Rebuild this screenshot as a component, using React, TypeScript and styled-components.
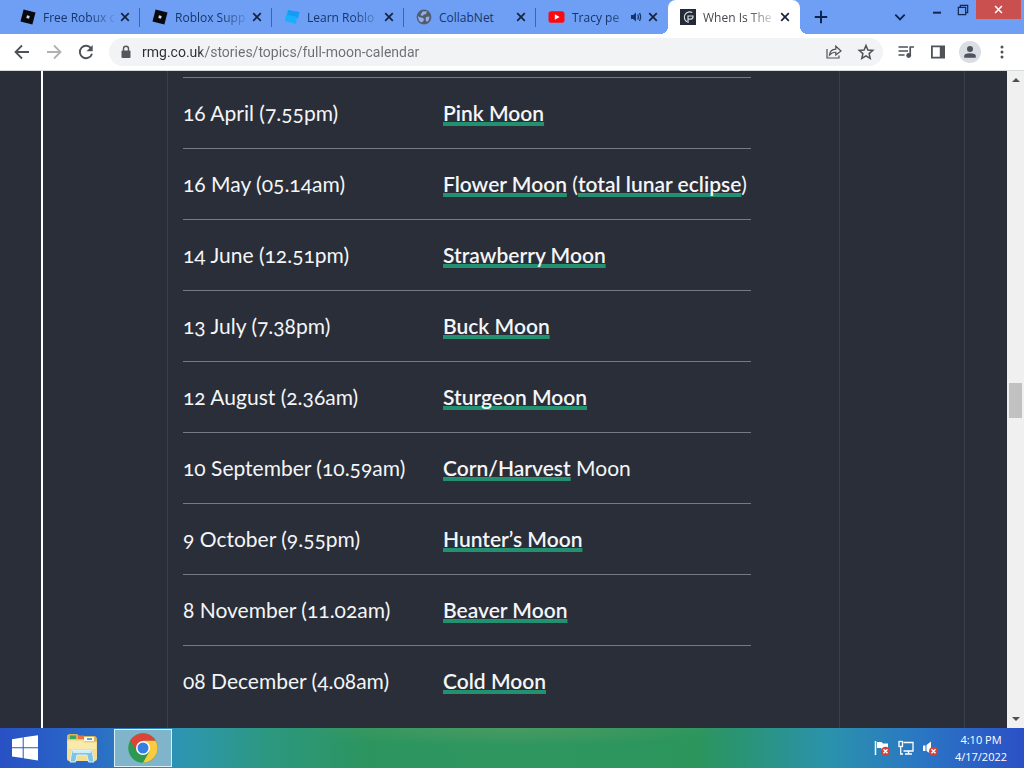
import React from "react";
import styled, { createGlobalStyle, css } from "styled-components";

const GlobalStyle = createGlobalStyle`
  *, *::before, *::after { box-sizing: border-box; }
  body { margin: 0; font-family: "Open Sans", "Noto Sans", sans-serif; }
  button { border: 0; padding: 0; margin: 0; background: none; font: inherit; color: inherit; cursor: default; }
`;

const Desktop = styled.div`
  display: flex;
  flex-direction: column;
  height: 100vh;
  overflow: hidden;
`;

/* ---------- tab strip ---------- */

const TabStrip = styled.header`
  display: flex;
  flex: none;
  height: 34px;
  padding: 0 3px 0 8px;
  background: #6e9ff5;
  color: #173568;
`;

const Tabs = styled.div`
  display: flex;
`;

const TabItem = styled.div<{ $active?: boolean; $divided?: boolean }>`
  position: relative;
  display: flex;
  align-items: center;
  width: 132px;
  padding: 0 7px 0 12px;
  ${(p) =>
    p.$divided &&
    css`
      &::after {
        content: "";
        position: absolute;
        right: 0;
        top: 8px;
        width: 1px;
        height: 19px;
        background: #3d64ad;
      }
    `}
  ${(p) =>
    p.$active &&
    css`
      background: #fff;
      color: #45494d;
      border-radius: 8px 8px 0 0;
      &::before,
      &::after {
        content: "";
        position: absolute;
        bottom: 0;
        width: 8px;
        height: 8px;
      }
      &::before {
        right: 100%;
        background: radial-gradient(circle at 0 0, transparent 8px, #fff 8px);
      }
      &::after {
        left: 100%;
        background: radial-gradient(circle at 100% 0, transparent 8px, #fff 8px);
      }
    `}
`;

const TabButton = styled.button`
  display: flex;
  flex: 1;
  min-width: 0;
  height: 34px;
  align-items: center;
  font-size: 12px;
  svg {
    flex: none;
  }
`;

const TabTitle = styled.span<{ $fade: boolean }>`
  flex: 1;
  min-width: 0;
  margin-left: 7px;
  white-space: nowrap;
  text-align: left;
  ${(p) =>
    p.$fade &&
    css`
      mask-image: linear-gradient(to right, #000 65%, rgba(0, 0, 0, 0.15));
    `}
`;

const CloseTab = styled.button`
  display: flex;
  flex: none;
  align-items: center;
  justify-content: center;
  width: 16px;
  height: 16px;
  margin-left: 3px;
  color: #17233d;
`;

const StripButton = styled.button`
  display: flex;
  align-items: center;
  justify-content: center;
  width: 28px;
  height: 34px;
  margin-left: 7px;
  color: #0d2350;
`;

const WindowControls = styled.div`
  display: flex;
  color: #14284f;
`;

const WindowButton = styled.button<{ $close?: boolean }>`
  display: flex;
  align-items: center;
  justify-content: center;
  width: ${(p) => (p.$close ? 45 : 26)}px;
  height: 19px;
  background: ${(p) => (p.$close ? "#c9504e" : "transparent")};
  color: ${(p) => (p.$close ? "#fff" : "inherit")};
`;

const ListTabs = styled(StripButton)`
  margin: 0 10px 0 auto;
`;

/* ---------- toolbar ---------- */

const Toolbar = styled.div`
  display: flex;
  flex: none;
  align-items: center;
  height: 37px;
  padding: 0 6px;
  background: #fff;
  border-bottom: 1px solid #d5dadb;
  color: #4f5357;
`;

const ToolButton = styled.button<{ $dim?: boolean }>`
  display: flex;
  flex: none;
  align-items: center;
  justify-content: center;
  width: 32px;
  height: 28px;
  opacity: ${(p) => (p.$dim ? 0.45 : 1)};
`;

const Omnibox = styled.form`
  display: flex;
  flex: 1;
  align-items: center;
  height: 28px;
  margin: 0 7px;
  padding: 0 1px 0 10px;
  background: #f1f3f4;
  border-radius: 14px;
`;

const Address = styled.input`
  flex: 1;
  min-width: 0;
  height: 28px;
  margin-left: 9px;
  padding: 0;
  border: 0;
  outline: 0;
  font: 14px/28px Roboto, "Open Sans", sans-serif;
  color: transparent;
  background: linear-gradient(to right, #2b2e31 60px, #6a6f74 60px);
  background-clip: text;
`;

const Avatar = styled.span`
  display: flex;
  width: 22px;
  height: 22px;
  border-radius: 50%;
  background: #dadde3;
`;

/* ---------- web page ---------- */

const Viewport = styled.div`
  display: flex;
  flex: 1;
  min-height: 0;
  background: #292e39;
`;

const Gutter = styled.div`
  flex: none;
  width: 43px;
  border-right: 2px solid #fff;
`;

const Page = styled.main`
  display: flex;
  flex: 1;
  min-width: 0;
  margin: 0 42px 0 124px;
  border: solid #3a404b;
  border-width: 0 1px;
`;

const Article = styled.article`
  flex: 1;
  min-width: 0;
  margin-right: 124px;
  padding: 6px 88px 0 15px;
  border-right: 1px solid #3a404b;
  overflow: hidden;
`;

const MoonTable = styled.table`
  width: 100%;
  border-collapse: separate;
  border-spacing: 0;
  table-layout: fixed;
  font-family: "Lato", "Open Sans", sans-serif;
  font-size: 21px;
  line-height: 30px;
  font-variant-numeric: oldstyle-nums;
  color: #f4f5f7;
`;

const Cell = styled.td<{ $date?: boolean }>`
  width: ${(p) => (p.$date ? "260px" : "auto")};
  height: 71px;
  padding: 0;
  border-top: 1px solid #747a84;
  white-space: nowrap;
`;

const MoonLink = styled.a`
  color: inherit;
  font-weight: 600;
  text-decoration: underline 4px #23906f;
  text-underline-offset: 1px;
  text-decoration-skip-ink: none;
`;

const ScrollTrack = styled.div`
  display: flex;
  flex: none;
  flex-direction: column;
  align-items: center;
  width: 17px;
  background: #f0f0f1;
`;

const ScrollArrow = styled.button`
  display: flex;
  flex: none;
  align-items: center;
  justify-content: center;
  width: 17px;
  height: 18px;
  color: #4d4f52;
`;

const ScrollLane = styled.div`
  display: grid;
  flex: 1;
  grid-template-rows: 294fr 35px 292fr;
`;

const Thumb = styled.div`
  grid-row: 2;
  width: 13px;
  background: #c1c1c2;
`;

/* ---------- taskbar ---------- */

const Taskbar = styled.footer`
  display: flex;
  flex: none;
  align-items: center;
  height: 40px;
  background:
    radial-gradient(ellipse 220px 18px at 50% 0, #489b61, transparent),
    linear-gradient(to right, #2850c4 0, #2a6bc8 9%, #2d96b0 18%, #2c9880 26%, #2c955f 36%, #2f9660 50%, #2b955c 68%, #2a9480 74%, #2a92ac 81%, #2a76c4 90%, #2b50c6 100%);
`;

const TaskButton = styled.button<{ $active?: boolean; $wide?: boolean }>`
  display: flex;
  align-items: center;
  justify-content: center;
  width: ${(p) => (p.$wide ? 58 : 50)}px;
  height: 38px;
  margin-left: ${(p) => (p.$wide ? 3 : 0)}px;
  ${(p) =>
    p.$active &&
    css`
      background: #7fb4cb;
      border: 1px solid #d9eff8;
    `}
`;

const Tray = styled.div`
  display: flex;
  gap: 8px;
  align-items: center;
  margin-left: auto;
  button {
    display: flex;
  }
`;

const Clock = styled.time`
  width: 86px;
  text-align: center;
  font-size: 11px;
  line-height: 17px;
  color: #fff;
  span {
    display: block;
  }
`;

/* ---------- drawings ---------- */

const RobloxIcon = () => (
  <svg width="16" height="16" viewBox="0 0 16 16">
    <path d="M3.6 .5 15.5 3.6 12.4 15.5 .5 12.4Z" fill="#08090d" />
    <path d="M7 6.300 9.700 7 9 9.700 6.300 9Z" fill="#c9d6f2" />
  </svg>
);

const LearnIcon = () => (
  <svg width="16" height="16" viewBox="0 0 16 16">
    <path d="M4 1 15.5 3 14 9.5 2.5 7.5Z" fill="#149cf4" />
    <path d="M2 5.5 13 8 12 15 .8 12Z" fill="#18b0fb" />
  </svg>
);

const GlobeIcon = () => (
  <svg width="16" height="16" viewBox="0 0 16 16">
    <circle cx="8" cy="8" r="7.4" fill="#535c6c" />
    <path d="M2 7q2 2 4 1.500l2 1.500-.5 2 -2 1.500Q2 12 2 7ZM6.500 2.500 11 2.300 10 5 8 5.500 6.500 7 4.500 6ZM10 8l3.500-.5Q13.500 11 11 13L9.500 11Z" fill="#8fb0e8" />
  </svg>
);

const YoutubeIcon = () => (
  <svg width="17" height="16" viewBox="0 0 17 16">
    <rect x=".5" y="2.300" width="16" height="11.400" rx="2.800" fill="#fb0b10" />
    <path d="M6.800 5.300 11.600 8 6.800 10.700Z" fill="#fff" />
  </svg>
);

const GreenwichIcon = () => (
  <svg width="16" height="16" viewBox="0 0 16 16">
    <path d="M0 0H16V16H0Z" fill="#252b36" />
    <g fill="none" stroke="#d5dae2" strokeWidth="1.200">
      <path d="M12.300 3.600A5.300 5.300 0 1 0 7 12.800M8 14V7H13.500M8 10.200H10.500Q13.500 9.700 13 6.500" />
    </g>
  </svg>
);

const SpeakerIcon = () => (
  <svg width="12" height="12" viewBox="0 0 12 12">
    <path d="M1 4H3.200L6 1.500V10.500L3.200 8H1Z" fill="currentColor" />
    <path d="M7.700 3.500Q9 6 7.700 8.500M9.500 2.200Q11.700 6 9.500 9.800" fill="none" stroke="currentColor" strokeWidth="1.300" />
  </svg>
);

const Cross = ({ size = 10, weight = 1.7 }: { size?: number; weight?: number }) => (
  <svg width={size} height={size} viewBox="0 0 10 10">
    <path d="M1.200 1.200 8.800 8.800M8.800 1.200 1.200 8.800" stroke="currentColor" strokeWidth={weight} />
  </svg>
);

const Line = ({ d, weight = 1.8, size = 18 }: { d: string; weight?: number; size?: number }) => (
  <svg width={size} height={size} viewBox="0 0 18 18">
    <path d={d} fill="none" stroke="currentColor" strokeWidth={weight} />
  </svg>
);

const ReloadIcon = () => (
  <svg width="18" height="18" viewBox="0 0 18 18">
    <path d="M14.300 5.700A6.200 6.200 0 1 0 15 10.700" fill="none" stroke="currentColor" strokeWidth="1.900" />
    <path d="M15.700 2V8.200H9.500Z" fill="currentColor" />
  </svg>
);

const LockIcon = () => (
  <svg width="14" height="14" viewBox="0 0 14 14">
    <rect x="2.500" y="5.500" width="9" height="7.500" rx="1" fill="#54585c" />
    <path d="M4.500 6V3.800a2.500 2.500 0 0 1 5 0V6" fill="none" stroke="#54585c" strokeWidth="1.400" />
  </svg>
);

const ShareIcon = () => (
  <svg width="18" height="18" viewBox="0 0 18 18">
    <g fill="none" stroke="currentColor" strokeWidth="1.200">
      <path d="M2 6V15H14V12.500" />
      <path d="M4.500 12Q5 6.500 10.800 6.200V3.200L16 8 10.800 12V9.300Q7 9 4.500 12Z" />
    </g>
  </svg>
);

const MediaIcon = () => (
  <svg width="18" height="18" viewBox="0 0 18 18">
    <path d="M1.500 4H11M1.500 8H11M1.500 12H7.500M13.200 13V4H17" fill="none" stroke="currentColor" strokeWidth="1.700" />
    <circle cx="11.700" cy="12.500" r="2.400" fill="currentColor" />
  </svg>
);

const PanelIcon = () => (
  <svg width="16" height="16" viewBox="0 0 16 16">
    <path d="M1 1.500H15V14.500H1ZM2.800 3.300V12.700H9.800V3.300Z" fillRule="evenodd" fill="currentColor" />
  </svg>
);

const PersonIcon = () => (
  <svg width="22" height="22" viewBox="0 0 22 22">
    <circle cx="11" cy="7.900" r="3" fill="#4e535c" />
    <path d="M5.200 16.700V15Q5.200 12.300 11 12.300T16.800 15V16.700Z" fill="#4e535c" />
  </svg>
);

const MenuIcon = () => (
  <svg width="6" height="18" viewBox="0 0 6 18" fill="currentColor">
    <circle cx="3" cy="4" r="1.500" />
    <circle cx="3" cy="9" r="1.500" />
    <circle cx="3" cy="14" r="1.500" />
  </svg>
);

const WindowsIcon = () => (
  <svg width="28" height="28" viewBox="0 0 28 28" fill="#fff">
    <path d="M1 5.200 11.700 3.500V13.300H1ZM12.700 3.300 27 1.200V13.300H12.700ZM1 14.300H11.700V24L1 22.500ZM12.700 14.300H27V26.500L12.700 24.200Z" />
  </svg>
);

const FolderIcon = () => (
  <svg width="34" height="32" viewBox="0 0 34 32">
    <path d="M2 3.500 4 2H12L14 4H30L32 6V27Q32 29 30 29H4Q2 29 2 27Z" fill="#d7b658" />
    <path d="M5 3.500H11V7H5Z" fill="#36a56b" />
    <path d="M13 3.500H19V7H13Z" fill="#e87349" />
    <path d="M19 5H29V9H19Z" fill="#f7fafa" />
    <path d="M22 6H27V8H22Z" fill="#5aa4d6" />
    <path d="M2 7.500H18L20 9.500H32V27L30 29H4L2 27Z" fill="#f5de8f" />
    <path d="M3 9H17L19 11H31V17H3Z" fill="#fae9ad" />
    <path d="M7 18.500H27L29 30H23.500L22 23H12L10.500 30H5Z" fill="#7cc5e5" stroke="#d6f1fa" />
    <path d="M8 20H26" stroke="#e8f9ff" strokeWidth="1.500" />
  </svg>
);

const ChromeIcon = () => (
  <svg width="30" height="30" viewBox="0 0 30 30">
    <circle cx="15" cy="15" r="14.700" fill="#2c9a50" />
    <path d="M2.300 7.700A14.700 14.700 0 0 1 27.700 7.700L15 8 9 18.500Z" fill="#dc4437" />
    <path d="M27.700 7.700A14.700 14.700 0 0 1 15 29.700L21.400 18.500 15 7.700Z" fill="#fbca3e" />
    <circle cx="15" cy="15" r="7" fill="#fff" />
    <circle cx="15" cy="15" r="5.500" fill="#367fe2" />
  </svg>
);

const AlertBadge = () => (
  <g>
    <circle cx="11.500" cy="11.300" r="4.500" fill="#d8403c" />
    <path d="M9.500 9.300 13.500 13.300M13.500 9.300 9.500 13.300" stroke="#fff" strokeWidth="1.400" />
  </g>
);

const FlagIcon = () => (
  <svg width="16" height="16" viewBox="0 0 16 16">
    <path d="M1.500 1V15" stroke="#fff" strokeWidth="1.500" />
    <path d="M3 2H7.500L9 3.500H14V9.500H8L7 8H3Z" fill="#fff" />
    <AlertBadge />
  </svg>
);

const NetworkIcon = () => (
  <svg width="16" height="16" viewBox="0 0 16 16" fill="none" stroke="#fff" strokeWidth="1.300">
    <path d="M5.500 2.500H15V11H5.500M10.500 11V13.500M7 14H14M2.700 6.500V14H5" />
    <rect x="1" y="1.500" width="3.500" height="5" />
  </svg>
);

const MutedIcon = () => (
  <svg width="16" height="16" viewBox="0 0 16 16">
    <path d="M1 5.500H3.500V11H1ZM4.500 5 9 1.500V14L4.500 11Z" fill="#fff" />
    <AlertBadge />
  </svg>
);

/* ---------- data ---------- */

const tabs = [
  { title: "Free Robux c", icon: <RobloxIcon />, fade: true },
  { title: "Roblox Supp", icon: <RobloxIcon />, fade: true },
  { title: "Learn Roblo", icon: <LearnIcon />, fade: true },
  { title: "CollabNet", icon: <GlobeIcon />, fade: false },
  { title: "Tracy pe", icon: <YoutubeIcon />, fade: true, audio: true },
  { title: "When Is The", icon: <GreenwichIcon />, fade: true, active: true },
];

const moons: [string, React.ReactNode][] = [
  ["16 April (7.55pm)", <MoonLink href="#pink">Pink Moon</MoonLink>],
  [
    "16 May (05.14am)",
    <>
      <MoonLink href="#flower">Flower Moon</MoonLink> (<MoonLink href="#eclipse">total lunar eclipse</MoonLink>)
    </>,
  ],
  ["14 June (12.51pm)", <MoonLink href="#strawberry">Strawberry Moon</MoonLink>],
  ["13 July (7.38pm)", <MoonLink href="#buck">Buck Moon</MoonLink>],
  ["12 August (2.36am)", <MoonLink href="#sturgeon">Sturgeon Moon</MoonLink>],
  [
    "10 September (10.59am)",
    <>
      <MoonLink href="#harvest">Corn/Harvest</MoonLink> Moon
    </>,
  ],
  ["9 October (9.55pm)", <MoonLink href="#hunter">Hunter’s Moon</MoonLink>],
  ["8 November (11.02am)", <MoonLink href="#beaver">Beaver Moon</MoonLink>],
  ["08 December (4.08am)", <MoonLink href="#cold">Cold Moon</MoonLink>],
];

export default function App() {
  return (
    <Desktop>
      <GlobalStyle />
      <TabStrip>
        <Tabs>
          {tabs.map((tab, i) => (
            <TabItem key={tab.title} $active={tab.active} $divided={i < 4}>
              <TabButton>
                {tab.icon}
                <TabTitle $fade={tab.fade}>{tab.title}</TabTitle>
                {tab.audio && <SpeakerIcon />}
              </TabButton>
              <CloseTab aria-label={`Close ${tab.title}`}>
                <Cross />
              </CloseTab>
            </TabItem>
          ))}
        </Tabs>
        <StripButton aria-label="New tab">
          <Line size={16} weight={2.2} d="M9 2V16M2 9H16" />
        </StripButton>
        <ListTabs aria-label="Search tabs">
          <Line size={14} weight={2.4} d="M3 6 9 12 15 6" />
        </ListTabs>
        <WindowControls>
          <WindowButton aria-label="Minimize">
            <Line size={12} weight={3} d="M3 13H15" />
          </WindowButton>
          <WindowButton aria-label="Restore">
            <Line size={12} weight={1.8} d="M2 5H13V16H2ZM5 5V2H16V13H13" />
          </WindowButton>
          <WindowButton $close aria-label="Close window">
            <Cross size={9} />
          </WindowButton>
        </WindowControls>
      </TabStrip>

      <Toolbar>
        <ToolButton aria-label="Back">
          <Line d="M16 9H3M9 2.500 2.500 9 9 15.500" />
        </ToolButton>
        <ToolButton $dim aria-label="Forward">
          <Line d="M2 9H15M9 2.500 15.500 9 9 15.500" />
        </ToolButton>
        <ToolButton aria-label="Reload">
          <ReloadIcon />
        </ToolButton>
        <Omnibox>
          <LockIcon />
          <Address aria-label="Address" defaultValue="rmg.co.uk/stories/topics/full-moon-calendar" />
          <ToolButton type="button" aria-label="Share">
            <ShareIcon />
          </ToolButton>
          <ToolButton type="button" aria-label="Bookmark">
            <Line weight={1.5} d="M9 2.500 10.900 7 15.800 7.400 12.100 10.600 13.200 15.400 9 12.800 4.800 15.400 5.900 10.600 2.200 7.400 7.100 7Z" />
          </ToolButton>
        </Omnibox>
        <ToolButton aria-label="Media controls">
          <MediaIcon />
        </ToolButton>
        <ToolButton aria-label="Side panel">
          <PanelIcon />
        </ToolButton>
        <ToolButton aria-label="Profile">
          <Avatar>
            <PersonIcon />
          </Avatar>
        </ToolButton>
        <ToolButton aria-label="Menu">
          <MenuIcon />
        </ToolButton>
      </Toolbar>

      <Viewport>
        <Gutter />
        <Page>
          <Article>
            <MoonTable>
              <tbody>
                {moons.map(([date, name]) => (
                  <tr key={date}>
                    <Cell $date>{date}</Cell>
                    <Cell>{name}</Cell>
                  </tr>
                ))}
              </tbody>
            </MoonTable>
          </Article>
        </Page>
        <ScrollTrack>
          <ScrollArrow aria-label="Scroll up">
            <svg width="8" height="4" viewBox="0 0 8 4"><path d="M0 4 4 0 8 4Z" fill="currentColor" /></svg>
          </ScrollArrow>
          <ScrollLane>
            <Thumb />
          </ScrollLane>
          <ScrollArrow aria-label="Scroll down">
            <svg width="8" height="4" viewBox="0 0 8 4"><path d="M0 0 4 4 8 0Z" fill="currentColor" /></svg>
          </ScrollArrow>
        </ScrollTrack>
      </Viewport>

      <Taskbar>
        <TaskButton aria-label="Start">
          <WindowsIcon />
        </TaskButton>
        <TaskButton $wide aria-label="File Explorer">
          <FolderIcon />
        </TaskButton>
        <TaskButton $wide $active aria-label="Chrome">
          <ChromeIcon />
        </TaskButton>
        <Tray>
          <button aria-label="Action center"><FlagIcon /></button>
          <button aria-label="Network"><NetworkIcon /></button>
          <button aria-label="Volume"><MutedIcon /></button>
        </Tray>
        <Clock dateTime="2022-04-17T16:10">
          <span>4:10 PM</span>
          <span>4/17/2022</span>
        </Clock>
      </Taskbar>
    </Desktop>
  );
}
